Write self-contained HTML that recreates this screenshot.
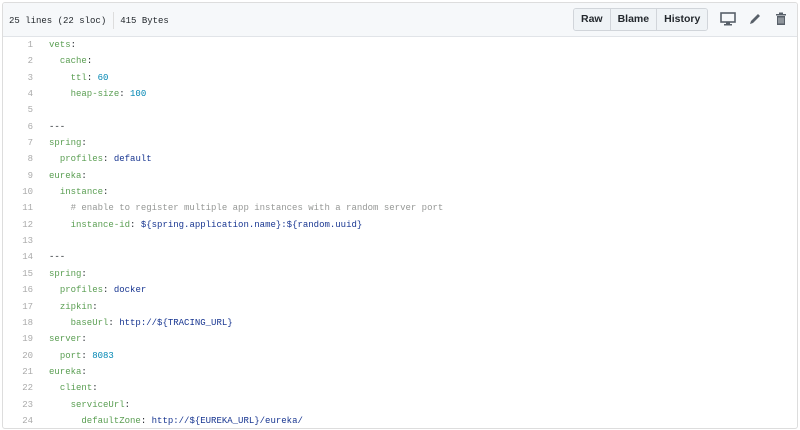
<!DOCTYPE html>
<html><head><meta charset="utf-8"><style>
body{margin:0;background:#fff;width:800px;height:430px;overflow:hidden;font-family:"Liberation Sans",sans-serif}
.box{position:absolute;left:2px;top:2px;width:794px;height:425px;border:1px solid #ddd;border-radius:3px;overflow:hidden}
.hd{height:33px;background:#f6f8fa;border-bottom:1px solid #e1e4e8;position:relative;font-family:"Liberation Mono",monospace;font-size:9px;color:#24292e}
.hd .info{position:absolute;left:6px;top:9px}
.hd .sep{display:inline-block;width:1px;height:17px;background:#ddd;vertical-align:middle;margin:0 6px 0 7px}
.btns{position:absolute;left:570px;top:5px;display:flex;border:1px solid #d1d5da;border-radius:3px;overflow:hidden;font-family:"Liberation Sans",sans-serif;font-weight:bold;font-size:10.5px}
.btns span{display:block;padding:0 7px;height:21px;line-height:21px;background:#eff3f6;border-right:1px solid #d1d5da;color:#24292e}
.btns span:last-child{border-right:none}
.ic{position:absolute;top:9px}
.code{font-family:"Liberation Mono",monospace;font-size:9px;position:absolute;top:37px;left:0;width:100%}
.r{height:16.35px;line-height:16.35px;white-space:pre;position:relative}
.n{position:absolute;left:0;width:33px;text-align:right;color:#aaa}
.c{position:absolute;left:49px;color:#24292e}
.k{color:#5a9e52}.v{color:#0086b3}.s{color:#183691}.m{color:#969896}
</style></head><body>
<div class="box">
<div class="hd"><div class="info">25 lines (22 sloc)<span class="sep"></span>415 Bytes</div>
<div class="btns"><span>Raw</span><span>Blame</span><span>History</span></div>
<svg class="ic" style="left:717px" width="16" height="14" viewBox="0 0 16 14"><rect x="1" y="1" width="14" height="9" fill="none" stroke="#586069" stroke-width="1.6"/><rect x="6" y="10" width="4" height="2" fill="#586069"/><rect x="4" y="12" width="8" height="1.5" fill="#586069"/></svg>
<svg class="ic" style="left:745px" width="14" height="14" viewBox="0 0 14 14"><path d="M2 12 L3 9 L10 2 L12 4 L5 11 Z" fill="#586069"/></svg>
<svg class="ic" style="left:772px" width="12" height="14" viewBox="0 0 12 14"><rect x="1" y="2" width="10" height="1.5" fill="#586069"/><rect x="4" y="0.5" width="4" height="1.5" fill="#586069"/><path d="M2 4 H10 V13 H2 Z" fill="#586069"/><path d="M4 5.5V11.5M6 5.5V11.5M8 5.5V11.5" stroke="#f6f8fa" stroke-width="0.7"/></svg>
</div>
</div>
<div class="code">
<div class="r"><span class="n">1</span><span class="c"><span class="k">vets</span>:</span></div>
<div class="r"><span class="n">2</span><span class="c">  <span class="k">cache</span>:</span></div>
<div class="r"><span class="n">3</span><span class="c">    <span class="k">ttl</span>: <span class="v">60</span></span></div>
<div class="r"><span class="n">4</span><span class="c">    <span class="k">heap-size</span>: <span class="v">100</span></span></div>
<div class="r"><span class="n">5</span><span class="c"></span></div>
<div class="r"><span class="n">6</span><span class="c">---</span></div>
<div class="r"><span class="n">7</span><span class="c"><span class="k">spring</span>:</span></div>
<div class="r"><span class="n">8</span><span class="c">  <span class="k">profiles</span>: <span class="s">default</span></span></div>
<div class="r"><span class="n">9</span><span class="c"><span class="k">eureka</span>:</span></div>
<div class="r"><span class="n">10</span><span class="c">  <span class="k">instance</span>:</span></div>
<div class="r"><span class="n">11</span><span class="c">    <span class="m"># enable to register multiple app instances with a random server port</span></span></div>
<div class="r"><span class="n">12</span><span class="c">    <span class="k">instance-id</span>: <span class="s">${spring.application.name}:${random.uuid}</span></span></div>
<div class="r"><span class="n">13</span><span class="c"></span></div>
<div class="r"><span class="n">14</span><span class="c">---</span></div>
<div class="r"><span class="n">15</span><span class="c"><span class="k">spring</span>:</span></div>
<div class="r"><span class="n">16</span><span class="c">  <span class="k">profiles</span>: <span class="s">docker</span></span></div>
<div class="r"><span class="n">17</span><span class="c">  <span class="k">zipkin</span>:</span></div>
<div class="r"><span class="n">18</span><span class="c">    <span class="k">baseUrl</span>: <span class="s">http://${TRACING_URL}</span></span></div>
<div class="r"><span class="n">19</span><span class="c"><span class="k">server</span>:</span></div>
<div class="r"><span class="n">20</span><span class="c">  <span class="k">port</span>: <span class="v">8083</span></span></div>
<div class="r"><span class="n">21</span><span class="c"><span class="k">eureka</span>:</span></div>
<div class="r"><span class="n">22</span><span class="c">  <span class="k">client</span>:</span></div>
<div class="r"><span class="n">23</span><span class="c">    <span class="k">serviceUrl</span>:</span></div>
<div class="r"><span class="n">24</span><span class="c">      <span class="k">defaultZone</span>: <span class="s">http://${EUREKA_URL}/eureka/</span></span></div>
</div>
</body></html>
